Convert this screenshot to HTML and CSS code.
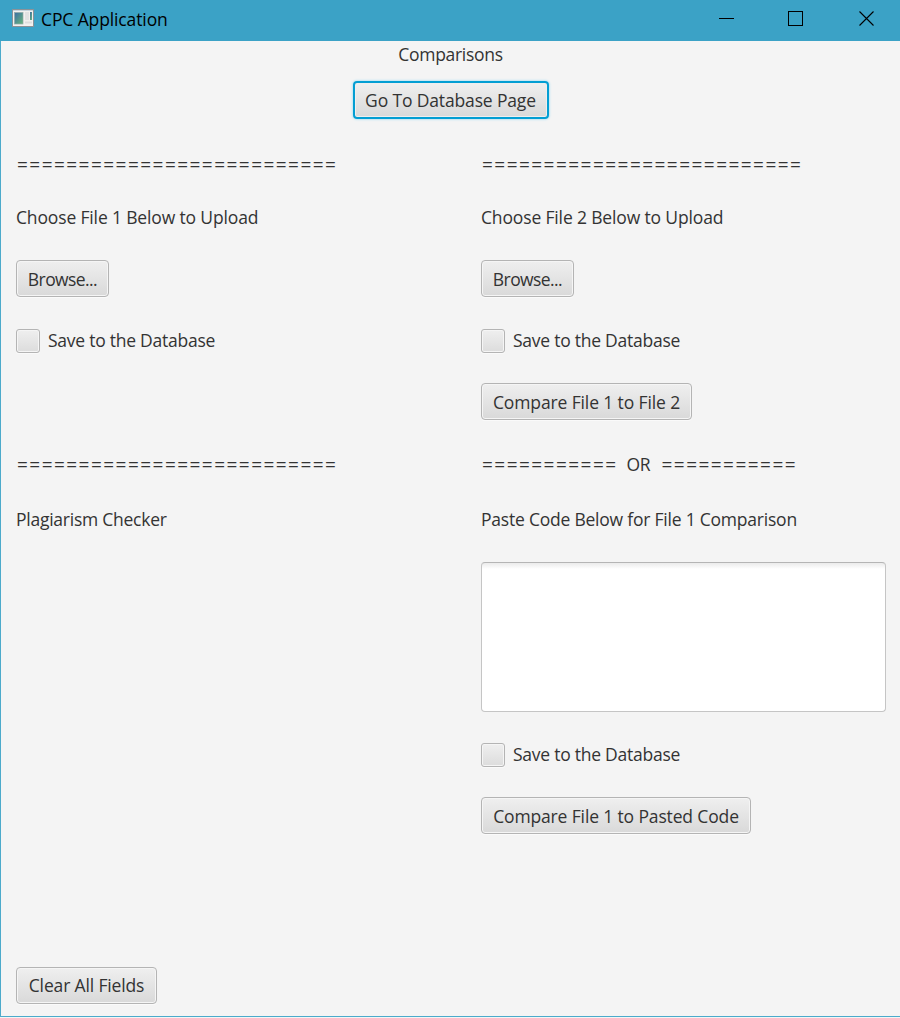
FILE: index.html
```html
<!DOCTYPE html>
<html lang="en">
<head>
<meta charset="utf-8">
<title>CPC Application</title>
<link rel="stylesheet" href="styles.css">
</head>
<body>
<div class="window">
  <header class="titlebar">
    <svg class="app-icon" width="22" height="18" viewBox="0 0 22 18">
      <defs><linearGradient id="pane" x1="0" y1="0" x2="1" y2="1"><stop offset="0" stop-color="#3c6ea5"/><stop offset="1" stop-color="#68b77b"/></linearGradient></defs>
      <rect x=".5" y=".5" width="21" height="17" fill="#f3f1ef" stroke="#8b9298"/>
      <path d="M1 1.5h20" stroke="#c7d4dc"/>
      <rect x="2.500" y="3.500" width="8.500" height="11.500" fill="url(#pane)" stroke="#92aaa8" stroke-width=".7"/>
      <rect x="13" y="3" width="4" height="8" fill="#e2e2e2"/>
      <rect x="18" y="3" width="2" height="8" fill="url(#pane)"/>
      <path d="M13 13.500h7" stroke="#dedede" stroke-width="2"/>
    </svg>
    <span class="title">CPC Application</span>
    <svg class="controls" width="156" height="16" viewBox="0 0 156 16" fill="none" stroke="#000">
      <path d="M0 8.500h15"/>
      <rect x="69.500" y="1.500" width="14" height="14"/>
      <path d="M140.500 1.500l14 14M154.500 1.500l-14 14" stroke-width="1.100"/>
    </svg>
  </header>
  <main class="content">
    <div class="heading">Comparisons</div>
    <button class="btn btn-database focused">Go To Database Page</button>
    <div class="columns">
      <section class="column">
        <div class="rule">==========================</div>
        <div class="label t-choose">Choose File 1 Below to Upload</div>
        <button class="btn btn-browse">Browse...</button>
        <label class="check"><span class="box"></span><span>Save to the Database</span></label>
        <div></div>
        <div class="rule">==========================</div>
        <div class="label t-plagiarism">Plagiarism Checker</div>
        <div></div>
        <div></div>
        <div></div>
        <div></div>
        <button class="btn btn-clear">Clear All Fields</button>
      </section>
      <section class="column">
        <div class="rule">==========================</div>
        <div class="label t-choose">Choose File 2 Below to Upload</div>
        <button class="btn btn-browse">Browse...</button>
        <label class="check"><span class="box"></span><span>Save to the Database</span></label>
        <button class="btn btn-compare">Compare File 1 to File 2</button>
        <div class="or-row"><span class="rule">===========</span><span class="or">OR</span><span class="rule">===========</span></div>
        <div class="label t-paste">Paste Code Below for File 1 Comparison</div>
        <textarea class="code"></textarea>
        <label class="check"><span class="box"></span><span>Save to the Database</span></label>
        <button class="btn btn-pasted">Compare File 1 to Pasted Code</button>
      </section>
    </div>
  </main>
</div>
</body>
</html>
```
FILE: styles.css
```css
* { box-sizing: border-box; }
body { margin: 0; background: #f4f4f4; font-family: "Open Sans", "Noto Sans", sans-serif; font-size: 17.5px; letter-spacing: -.25px; color: #333; }
.window { width: 900px; height: 1017px; border-left: 1px solid #4caacb; border-bottom: 1px solid #4caacb; background: #f4f4f4; }
.titlebar { height: 41px; background: #3ba2c6; display: flex; align-items: flex-start; color: #000; margin-left: -1px; padding-left: 12px; }
.app-icon { margin-top: 9px; }
.title { margin: 8px 0 0 7px; width: 140px; line-height: 22px; letter-spacing: -.12px; white-space: nowrap; }
.controls { margin: 10px 25px 0 auto; }
.content { display: flex; flex-direction: column; align-items: center; }
.heading { height: 40px; line-height: 26px; letter-spacing: -.3px; }
.columns { width: 100%; display: grid; grid-template-columns: 465px 405px; padding: 33px 0 0 15px; }
.column { display: grid; grid-template-rows: 24px 24px 39px 24px 39px 25px 24px 152px 24px 38px 71px 38px; row-gap: 30px; justify-items: start; }
.label, .check { line-height: 22px; white-space: nowrap; }
.t-choose { letter-spacing: -.15px; }
.t-paste { letter-spacing: -.22px; }
.t-paste, .t-plagiarism { line-height: 24px; }
.rule { padding-left: 1px; font-size: 19px; font-weight: 500; line-height: 24px; letter-spacing: 1.46px; white-space: nowrap; }
.btn { height: 37px; padding: 2px 0 0; border: 1px solid #b4b4b4; border-radius: 4px; background: linear-gradient(#efefef, #d9d9d9); box-shadow: inset 0 0 0 1px #f5f5f5, 0 1px 0 #fafafa; color: #333; font: inherit; line-height: 33px; white-space: nowrap; }
.focused { height: 38px; padding-top: 1px; border: 2px solid #039ed3; box-shadow: 0 0 2px 1px #bfe5f3, inset 0 0 0 1px #eee; }
.btn-database { width: 196px; letter-spacing: -.15px; }
.btn-browse { width: 93px; letter-spacing: -.58px; }
.btn-compare { width: 211px; letter-spacing: -.12px; }
.btn-pasted { width: 270px; letter-spacing: -.14px; }
.btn-clear { width: 141px; margin-top: 1px; padding-top: 0; letter-spacing: -.15px; }
.check { display: flex; gap: 8px; }
.box { width: 24px; height: 24px; border: 1px solid #b4b4b4; border-radius: 3px; background: linear-gradient(#efefef, #dcdcdc); box-shadow: inset 0 0 0 1px #f5f5f5, 0 1px 0 #fafafa; }
.or-row { display: flex; }
.or { flex: none; width: 44px; padding-left: 10px; line-height: 24px; }
.or-row .rule { flex: none; width: 135.500px; }
.code { display: block; width: 405px; height: 150px; margin: 1px 0 0; resize: none; border: 1px solid #c5c5c5; border-top-color: #b5b5b5; border-radius: 4px; background: linear-gradient(#ebebeb, #fff 6px); outline: none; }
```
